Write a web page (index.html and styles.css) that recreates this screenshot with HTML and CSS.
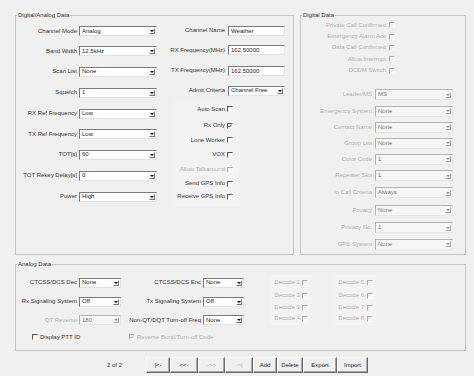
FILE: index.html
```html
<!DOCTYPE html>
<html>
<head>
<meta charset="utf-8">
<link rel="stylesheet" href="styles.css">
</head>
<body>
<div class="window">
  <div class="top">
    <div class="group g-da">
      <span class="legend">Digital/Analog Data</span>
      <div class="col-a">
        <label class="lbl">Channel Mode</label><div class="combo"><span class="val">Analog</span><span class="arrow"></span></div>
        <label class="lbl">Band Width</label><div class="combo"><span class="val">12.5kHz</span><span class="arrow"></span></div>
        <label class="lbl">Scan List</label><div class="combo"><span class="val">None</span><span class="arrow"></span></div>
        <label class="lbl">Squelch</label><div class="combo"><span class="val">1</span><span class="arrow"></span></div>
        <label class="lbl">RX Ref Frequency</label><div class="combo"><span class="val">Low</span><span class="arrow"></span></div>
        <label class="lbl">TX Ref Frequency</label><div class="combo"><span class="val">Low</span><span class="arrow"></span></div>
        <label class="lbl">TOT[s]</label><div class="combo"><span class="val">60</span><span class="arrow"></span></div>
        <label class="lbl">TOT Rekey Delay[s]</label><div class="combo"><span class="val">0</span><span class="arrow"></span></div>
        <label class="lbl">Power</label><div class="combo"><span class="val">High</span><span class="arrow"></span></div>
      </div>
      <div class="col-b">
        <div class="fields">
          <label class="lbl">Channel Name</label><div class="field">Weather</div>
          <label class="lbl">RX Frequency(MHz)</label><div class="field">162.50000</div>
          <label class="lbl">TX Frequency(MHz)</label><div class="field">162.50000</div>
          <label class="lbl">Admit Criteria</label><div class="combo"><span class="val">Channel Free</span><span class="arrow"></span></div>
        </div>
        <div class="checks">
          <label class="lbl">Auto Scan</label><span class="cb"></span>
          <label class="lbl">Rx Only</label><span class="cb"><svg class="tick" viewBox="0 0 4 4" width="4" height="4"><path d="M0.3 1.9 L1.5 3.1 L3.7 0.6" fill="none" stroke="#111" stroke-width="0.9"/></svg></span>
          <label class="lbl">Lone Worker</label><span class="cb"></span>
          <label class="lbl">VOX</label><span class="cb"></span>
          <label class="lbl dis">Allow Talkaround</label><span class="cb dis"></span>
          <label class="lbl">Send GPS Info</label><span class="cb"></span>
          <label class="lbl">Receive GPS Info</label><span class="cb"></span>
        </div>
      </div>
    </div>
    <div class="group g-d">
      <span class="legend">Digital Data</span>
      <div class="dchecks">
        <label class="lbl dis">Private Call Confirmed</label><span class="cb dis"></span>
        <label class="lbl dis">Emergency Alarm Ack</label><span class="cb dis"></span>
        <label class="lbl dis">Data Call Confirmed</label><span class="cb dis"></span>
        <label class="lbl dis">Allow Interrupt</label><span class="cb dis"></span>
        <label class="lbl dis">DCDM Switch</label><span class="cb dis"></span>
      </div>
      <div class="dsel">
        <label class="lbl dis">Leader/MS</label><div class="combo off tall"><span class="val">MS</span><span class="arrow"></span></div>
        <label class="lbl dis">Emergency System</label><div class="combo off tall"><span class="val">None</span><span class="arrow"></span></div>
        <label class="lbl dis">Contact Name</label><div class="combo off tall"><span class="val">None</span><span class="arrow"></span></div>
        <label class="lbl dis">Group List</label><div class="combo off tall"><span class="val">None</span><span class="arrow"></span></div>
        <label class="lbl dis">Color Code</label><div class="combo off tall"><span class="val">1</span><span class="arrow"></span></div>
        <label class="lbl dis">Repeater Slot</label><div class="combo off tall"><span class="val">1</span><span class="arrow"></span></div>
        <label class="lbl dis">In Call Criteria</label><div class="combo off tall"><span class="val">Always</span><span class="arrow"></span></div>
        <label class="lbl dis">Privacy</label><div class="combo off tall"><span class="val">None</span><span class="arrow"></span></div>
        <label class="lbl dis">Privacy No.</label><div class="combo off tall"><span class="val">1</span><span class="arrow"></span></div>
        <label class="lbl dis">GPS System</label><div class="combo off tall"><span class="val">None</span><span class="arrow"></span></div>
      </div>
    </div>
  </div>

  <div class="group g-an">
    <span class="legend">Analog Data</span>
    <div class="an-grid">
      <label class="lbl">CTCSS/DCS Dec</label><div class="combo"><span class="val">None</span><span class="arrow"></span></div>
      <label class="lbl">CTCSS/DCS Enc</label><div class="combo"><span class="val">None</span><span class="arrow"></span></div>
      <label class="lbl">Rx Signaling System</label><div class="combo"><span class="val">Off</span><span class="arrow"></span></div>
      <label class="lbl">Tx Signaling System</label><div class="combo"><span class="val">Off</span><span class="arrow"></span></div>
      <label class="lbl dis">QT Reverse</label><div class="combo off"><span class="val">180</span><span class="arrow"></span></div>
      <label class="lbl">Non-QT/DQT Turn-off Freq</label><div class="combo"><span class="val">None</span><span class="arrow"></span></div>
      <div class="inline ptt"><span class="cb"></span><label>Display PTT ID</label></div>
      <div class="inline rev"><span class="cb dis"><svg class="tick" viewBox="0 0 4 4" width="4" height="4"><path d="M0.3 1.9 L1.5 3.1 L3.7 0.6" fill="none" stroke="#a8a8a8" stroke-width="0.9"/></svg></span><label class="dis">Reverse Burst/Turn-off Code</label></div>
    </div>
    <div class="decode d1">
      <label class="lbl dis">Decode 1</label><span class="cb dis"></span>
      <label class="lbl dis">Decode 2</label><span class="cb dis"></span>
      <label class="lbl dis">Decode 3</label><span class="cb dis"></span>
      <label class="lbl dis">Decode 4</label><span class="cb dis"></span>
    </div>
    <div class="decode d2">
      <label class="lbl dis">Decode 5</label><span class="cb dis"></span>
      <label class="lbl dis">Decode 6</label><span class="cb dis"></span>
      <label class="lbl dis">Decode 7</label><span class="cb dis"></span>
      <label class="lbl dis">Decode 8</label><span class="cb dis"></span>
    </div>
  </div>

  <div class="nav">
    <span class="count">2 of 2</span>
    <button class="btn w1">|&lt;-</button>
    <button class="btn w2">&lt;&lt;-</button>
    <button class="btn w3 off">-&gt;&gt;</button>
    <button class="btn w4 off">-&gt;|</button>
    <button class="btn w5">Add</button>
    <button class="btn w6">Delete</button>
    <button class="btn w7">Export</button>
    <button class="btn w8">Import</button>
  </div>
</div>
</body>
</html>
```

FILE: styles.css
```css
* { box-sizing: border-box; }
html, body { margin: 0; padding: 0; }
body {
  width: 474px;
  height: 376px;
  overflow: hidden;
  background: #f0f0f0;
  font-family: "Liberation Sans", Arial, sans-serif;
  font-size: 6px;
  line-height: 7px;
  color: #333333;
}
.window { padding: 15px 0 0 15px; }

.top { display: flex; gap: 6px; height: 240px; }

.group { position: relative; border: 1px solid #c6c6c6; }
.legend {
  position: absolute;
  top: -4px;
  left: 1px;
  padding: 0 1px;
  background: #f0f0f0;
  line-height: 7px;
  white-space: nowrap;
}

.g-da { width: 279px; display: flex; align-items: flex-start; }
.g-d { width: 166px; }
.g-an { width: 451px; height: 87px; margin-top: 9px; display: flex; align-items: flex-start; }

.lbl { text-align: right; white-space: nowrap; }
.dis { color: #b0b0b0; }

/* left column */
.col-a {
  display: grid;
  grid-template-columns: 61px 78px;
  column-gap: 2px;
  grid-template-rows: 20px 20px 21px 21px 21px 20px 21px 21px 21px;
  align-items: center;
  margin-top: 5px;
}

/* middle column */
.col-b { margin-left: 1px; margin-top: 5px; }
.fields {
  display: grid;
  grid-template-columns: 67px 57px;
  column-gap: 3px;
  grid-template-rows: 19px 20px 21px 19px;
  align-items: center;
}
.checks {
  margin-left: 17px;
  width: 65px;
  background: #f3f3f3;
  display: grid;
  grid-template-columns: 50px 6px;
  column-gap: 2px;
  grid-template-rows: 18px 15px 14px 15px 15px 13px 13px;
  align-items: center;
  padding-bottom: 3px;
}

/* digital column */
.dchecks {
  display: grid;
  grid-template-columns: 85px 6px;
  column-gap: 3px;
  grid-template-rows: 12px 11px 11px 12px 11px;
  align-items: center;
  margin-top: 3px;
}
.dsel {
  display: grid;
  grid-template-columns: 72px 78px;
  column-gap: 2px;
  grid-template-rows: 17px 16px 16px 16px 16px 17px 17px 18px 17px 16px;
  align-items: center;
  margin-top: 10px;
}
.dsel .lbl { padding-right: 1px; }

/* analog */
.an-grid {
  display: grid;
  grid-template-columns: 63px 42px 82px 41px;
  grid-template-rows: 19px 19px 18px 16px;
  align-items: center;
  margin-top: 8px;
}
.an-grid .lbl { padding-right: 2px; }
.inline { display: flex; align-items: center; gap: 2px; white-space: nowrap; }
.ptt { grid-column: 1 / 3; padding-left: 16px; }
.rev { grid-column: 3 / 5; padding-left: 8px; }

.decode {
  margin-top: 10px;
  background: #f3f3f3;
  display: grid;
  grid-template-rows: 13px 13px 11px 11px;
  align-items: center;
  padding: 1px 0;
}
.d1 { margin-left: 26px; width: 42px; grid-template-columns: 30px 6px; column-gap: 2px; }
.d2 { margin-left: 23px; width: 41px; grid-template-columns: 29px 6px; column-gap: 3px; }

/* controls */
.combo {
  height: 10px;
  display: flex;
  align-items: center;
  background: #fff;
  border: 1px solid;
  border-color: #7a7a7a #e2e2e2 #e2e2e2 #7a7a7a;
  color: #222;
}
.combo.tall { height: 11px; }
.combo .val { flex: 1; padding-left: 2px; white-space: nowrap; overflow: hidden; }
.arrow {
  width: 6px;
  height: 6px;
  margin-right: 1px;
  background: #f0f0f0;
  border: 1px solid;
  border-color: #ffffff #707070 #707070 #ffffff;
  display: flex;
  align-items: center;
  justify-content: center;
}
.arrow::after {
  content: "";
  border-left: 2px solid transparent;
  border-right: 2px solid transparent;
  border-top: 2px solid #111;
}
.combo.off { background: #f6f6f6; border-color: #b4b4b4 #e6e6e6 #e6e6e6 #b4b4b4; }
.combo.off .val { color: #777; }
.combo.off .arrow { border-color: #ffffff #a8a8a8 #a8a8a8 #ffffff; }
.combo.off .arrow::after { border-top-color: #9a9a9a; }

.field {
  height: 10px;
  background: #fff;
  border: 1px solid;
  border-color: #7a7a7a #e2e2e2 #e2e2e2 #7a7a7a;
  padding-left: 2px;
  line-height: 8px;
  color: #222;
  white-space: nowrap;
}

.cb {
  width: 6px;
  height: 6px;
  background: #fff;
  border: 1px solid;
  border-color: #555 #f4f4f4 #f4f4f4 #555;
  display: flex;
  align-items: center;
  justify-content: center;
}
.cb.dis { background: #f4f4f4; border-color: #b0b0b0 #f8f8f8 #f8f8f8 #b0b0b0; }
.tick { display: block; flex: none; }

/* navigation */
.nav { display: flex; height: 16px; margin-top: 6px; }
.count { width: 39px; margin-left: 92px; align-self: center; }
.btn {
  font: inherit;
  height: 16px;
  padding: 0;
  margin: 0;
  background: transparent;
  color: #222;
  border: 1px solid;
  border-color: #ffffff #6a6a6a #6a6a6a #ffffff;
  box-shadow: inset -1px -1px #a8a8a8;
}
.btn.off { color: #b0b0b0; }
.w1 { width: 24px; }
.w2 { width: 28px; }
.w3 { width: 27px; }
.w4 { width: 28px; }
.w5 { width: 24px; }
.w6 { width: 26px; }
.w7 { width: 34px; }
.w8 { width: 31px; }
```
